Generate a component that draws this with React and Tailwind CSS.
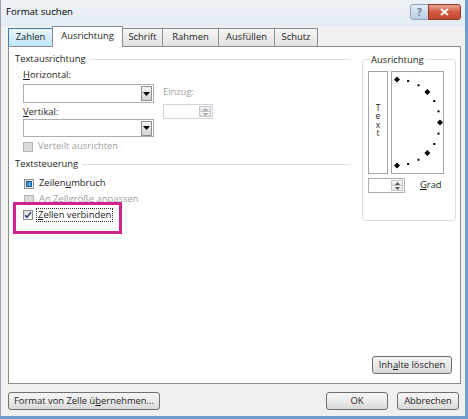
import React from 'react';

// points of the half-circle orientation dial (every 15°, big marks every 45°)
const DIAL = Array.from({ length: 13 }, (_, i) => {
  const deg = 90 - i * 15;
  const a = (deg * Math.PI) / 180;
  return { x: 6 + 43 * Math.cos(a), y: 51.5 - 43 * Math.sin(a), big: deg % 45 === 0 };
});

function Check({ state }) {
  if (state === 'disabled') {
    return <span className="w-[10px] h-[10px] shrink-0 border border-[#b4b4b4] bg-[#dadada]" />;
  }
  return (
    <span className="w-[10px] h-[10px] shrink-0 border border-[#8e8f8f] bg-gradient-to-br from-[#d8d8d8] to-[#fbfbfb] flex items-center justify-center">
      {state === 'mixed' && (
        <span className="w-[6px] h-[6px] border border-[#1f5b8e] bg-gradient-to-br from-[#2f86c6] to-[#5fb4e8]" />
      )}
      {state === 'checked' && (
        <svg width="8" height="8" viewBox="0 0 8 8">
          <path d="M1 4.2 L3 6.3 L7 1.2" fill="none" stroke="#243f7a" strokeWidth="1.4" />
        </svg>
      )}
    </span>
  );
}

function Combo({ h }) {
  return (
    <div className={`w-[131px] ${h} bg-white border border-[#abadb3] flex justify-end items-center pr-px`}>
      <span className="w-[11px] h-[15px] border border-[#8f8f8f] bg-gradient-to-b from-[#f3f3f3] to-[#d4d4d4] flex items-center justify-center">
        <svg width="7" height="4" viewBox="0 0 7 4">
          <path d="M0 0 H7 L3.5 4 Z" fill="#000" />
        </svg>
      </span>
    </div>
  );
}

function Spin({ w, disabled }) {
  const arrow = disabled ? '#a7a7a7' : '#555';
  return (
    <div className={`${w} h-[15px] bg-white border ${disabled ? 'border-[#cfd2d6]' : 'border-[#abadb3]'} flex justify-end p-px`}>
      <div className="w-[12px] flex flex-col">
        <span className="flex-1 border border-[#c3c8ce] bg-gradient-to-b from-[#f8f8f8] to-[#e2e2e2] flex items-center justify-center">
          <svg width="5" height="3" viewBox="0 0 5 3"><path d="M0 3 H5 L2.5 0 Z" fill={arrow} /></svg>
        </span>
        <span className="flex-1 border border-t-0 border-[#c3c8ce] bg-gradient-to-b from-[#f8f8f8] to-[#e2e2e2] flex items-center justify-center">
          <svg width="5" height="3" viewBox="0 0 5 3"><path d="M0 0 H5 L2.5 3 Z" fill={arrow} /></svg>
        </span>
      </div>
    </div>
  );
}

function GroupHeader({ children }) {
  return (
    <div className="h-[13px] flex items-center">
      <span className="text-[#1e1e1e]">{children}</span>
      <span className="flex-1 h-px ml-[4px] bg-[#dcdfe3]" />
    </div>
  );
}

const btn =
  'h-[18px] rounded-[3px] border border-[#707070] bg-gradient-to-b from-[#f4f4f4] via-[#ebebeb] to-[#d8d8d8] flex items-center justify-center text-[#1e1e1e]';

const tabs = [
  { name: 'Zahlen', w: 'w-[45px]', hover: true },
  { name: 'Ausrichtung', w: 'w-[71px]', active: true },
  { name: 'Schrift', w: 'w-[41px]' },
  { name: 'Rahmen', w: 'w-[57px]' },
  { name: 'Ausfüllen', w: 'w-[57px]' },
  { name: 'Schutz', w: 'w-[44px]' },
];

export default function App() {
  return (
    <div className="w-[468px] h-[419px] flex flex-col bg-[#f0f0f0] border-l border-[#9aa5b1] border-r-[3px] border-r-[#6d9dca] border-b-[3px] border-b-[#6d9dca] font-['Open_Sans','Liberation_Sans',sans-serif] text-[9.4px] text-[#1e1e1e] overflow-hidden">
      {/* title bar */}
      <div className="h-[26px] shrink-0 flex bg-gradient-to-b from-[#eef3f8] to-[#e4ebf2]">
        <span className="pl-[5px] pt-[5px] text-[9.6px] text-black">Format suchen</span>
        <div className="ml-auto mr-[4px] mt-[4px] flex h-[16px]">
          <span className="w-[19px] rounded-l-[3px] border border-[#8ea4bd] bg-gradient-to-b from-[#e4edf6] to-[#b9cde2] flex items-center justify-center text-[10px] font-bold text-[#6d7d90]">
            ?
          </span>
          <span className="w-[33px] -ml-px rounded-r-[3px] border border-[#8f3524] bg-gradient-to-b from-[#e9a496] via-[#d2573f] to-[#c24a31] flex items-center justify-center">
            <svg width="9" height="8" viewBox="0 0 9 8">
              <path d="M1 1 L8 7 M8 1 L1 7" stroke="#fff" strokeWidth="2" />
            </svg>
          </span>
        </div>
      </div>

      {/* tab strip */}
      <div className="h-[20px] shrink-0 flex items-end pl-[8px]">
        {tabs.map((t) =>
          t.active ? (
            <div
              key={t.name}
              className={`${t.w} h-[21px] -mb-px -ml-px relative z-10 bg-white border border-b-0 border-[#898c95] flex items-center justify-center pb-[2px]`}
            >
              {t.name}
            </div>
          ) : (
            <div
              key={t.name}
              className={`${t.w} h-[18px] -ml-px border border-b-0 flex items-center justify-center ${
                t.hover
                  ? 'border-[#3c7fb1] bg-gradient-to-b from-[#eaf6fd] to-[#bee6fd]'
                  : 'border-[#898c95] bg-gradient-to-b from-[#f6f6f6] to-[#e1e1e1]'
              }`}
            >
              {t.name}
            </div>
          )
        )}
      </div>

      {/* tab page */}
      <div className="relative ml-[7px] mr-[4px] h-[338px] shrink-0 bg-white border border-[#898c95] flex flex-col">
        <div className="flex">
          <div className="w-[342px] pl-[6px] pt-[6px]">
            <GroupHeader>Textausrichtung</GroupHeader>
            <div className="ml-[8px]">
              <div className="h-[13px] mt-[3px] flex items-center">
                <span><u>H</u>orizontal:</span>
              </div>
              <div className="flex mt-[2px]">
                <div>
                  <Combo h="h-[19px]" />
                  <div className="h-[13px] mt-[3px] flex items-center">
                    <span><u>V</u>ertikal:</span>
                  </div>
                  <Combo h="h-[18px]" />
                </div>
                <div className="ml-[9px] pt-[2px]">
                  <div className="h-[13px] flex items-center text-[#a0a0a0]">Einzug:</div>
                  <div className="mt-[5px]">
                    <Spin w="w-[50px]" disabled />
                  </div>
                </div>
              </div>
              <div className="h-[13px] mt-[3px] flex items-center gap-[5px] text-[#a0a0a0]">
                <Check state="disabled" />
                <span>Verteilt ausrichten</span>
              </div>
            </div>

            <div className="mt-[5px]">
              <GroupHeader>Textsteuerung</GroupHeader>
            </div>
            <div className="ml-[9px]">
              <div className="h-[13px] mt-[6px] flex items-center gap-[5px]">
                <Check state="mixed" />
                <span>Zeilen<u>u</u>mbruch</span>
              </div>
              <div className="h-[13px] mt-[3px] flex items-center gap-[5px] text-[#a0a0a0]">
                <Check state="disabled" />
                <span>An Zellgröße anpassen</span>
              </div>
              <div className="h-[13px] mt-[2px] flex items-center gap-[3px] -ml-px">
                <Check state="checked" />
                <span className="border border-dotted border-[#333] px-px leading-[12px]">
                  <u>Z</u>ellen verbinden
                </span>
              </div>
            </div>
          </div>

          {/* orientation group */}
          <fieldset className="ml-[11px] mt-[6px] w-[94px] border border-[#dcdfe3] rounded-[3px] pl-[5px] pb-[3px]">
            <legend className="ml-[2px] px-px leading-[13px]">Ausrichtung</legend>
            <div className="flex gap-[3px] pt-[5px]">
              <div className="w-[20px] h-[103px] border border-[#a5a5a5] flex items-center justify-center pb-[4px]">
                <span className="whitespace-pre-line text-center text-[8.5px] leading-[8.5px]">{'T\ne\nx\nt'}</span>
              </div>
              <div className="w-[53px] h-[103px] border border-[#a5a5a5]">
                <svg width="51" height="101" viewBox="1 1 51 101" className="block">
                  {DIAL.map((p, i) =>
                    p.big ? (
                      <polygon
                        key={i}
                        points={`${p.x},${p.y - 3} ${p.x + 3},${p.y} ${p.x},${p.y + 3} ${p.x - 3},${p.y}`}
                        fill="#000"
                      />
                    ) : (
                      <rect key={i} x={p.x - 1} y={p.y - 1} width="2" height="2" fill="#000" />
                    )
                  )}
                </svg>
              </div>
            </div>
            <div className="flex items-center mt-[4px]">
              <Spin w="w-[37px]" />
              <span className="ml-[15px]"><u>G</u>rad</span>
            </div>
          </fieldset>
        </div>

        <div className="flex-1" />
        <div className="flex justify-end pr-[8px] pb-[9px]">
          <button className={`${btn} w-[80px] h-[17px]`}>
            Inh<u>a</u>lte löschen
          </button>
        </div>

        {/* highlight frame around the merge option */}
        <div className="absolute left-[4px] top-[155px] w-[109px] h-[32px] border-[3px] border-[#d1238b]" />
      </div>

      {/* dialog buttons */}
      <div className="flex items-center mt-[8px] ml-[7px] mr-[6px]">
        <button className={`${btn} w-[152px]`}>
          Format von Zelle ü<u>b</u>ernehmen...
        </button>
        <button className={`${btn} ml-auto w-[62px] border-[#3c7fb1] from-[#eaf6fd] via-[#d9f0fc] to-[#bee6fd]`}>
          OK
        </button>
        <button className={`${btn} ml-[9px] w-[62px]`}>Abbrechen</button>
      </div>
    </div>
  );
}
